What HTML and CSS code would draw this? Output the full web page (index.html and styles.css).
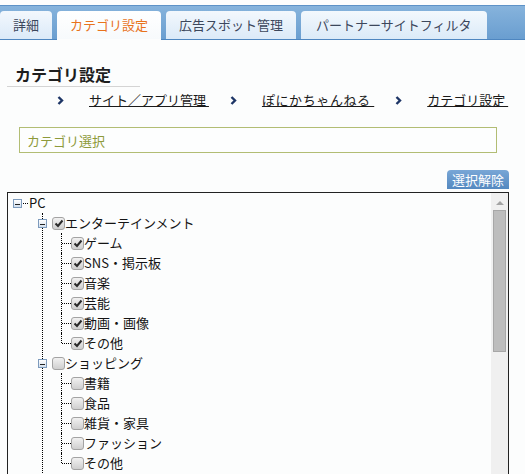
FILE: index.html
```html
<!DOCTYPE html>
<html lang="ja">
<head>
    <meta charset="UTF-8">
    <meta name="viewport" content="width=device-width, initial-scale=1.0">
    <title>カテゴリ設定</title>
    <link rel="stylesheet" href="styles.css">
</head>
<body>
    <div class="tabbar">
        <div class="tab">詳細</div>
        <div class="tab active">カテゴリ設定</div>
        <div class="tab">広告スポット管理</div>
        <div class="tab">パートナーサイトフィルタ</div>
    </div>

    <h1 class="title">カテゴリ設定</h1>

    <div class="crumbs">
        <div class="crumb">
            <svg class="chev" width="7" height="9" viewBox="0 0 7 9"><polyline points="1.5,1 5,4.5 1.5,8" fill="none" stroke="#1d3566" stroke-width="2.4"/></svg>
            <a href="#">サイト／アプリ管理&nbsp;</a>
        </div>
        <div class="crumb">
            <svg class="chev" width="7" height="9" viewBox="0 0 7 9"><polyline points="1.5,1 5,4.5 1.5,8" fill="none" stroke="#1d3566" stroke-width="2.4"/></svg>
            <a href="#">ぽにかちゃんねる&nbsp;</a>
        </div>
        <div class="crumb">
            <svg class="chev" width="7" height="9" viewBox="0 0 7 9"><polyline points="1.5,1 5,4.5 1.5,8" fill="none" stroke="#1d3566" stroke-width="2.4"/></svg>
            <a href="#">カテゴリ設定&nbsp;</a>
        </div>
    </div>

    <form class="search">
        <input name="category" placeholder="カテゴリ選択"/>
    </form>

    <div class="tools">
        <button class="clear">選択解除</button>
    </div>

    <div class="treebox">
        <div class="tree">
            <div class="row">
                <span class="exp"></span><span class="dots"></span><span class="label">PC</span>
            </div>
            <ul class="lvl1">
                <li>
                    <div class="row">
                        <span class="exp"></span>
                        <span class="cb on"><svg width="10" height="9" viewBox="0 0 10 9"><polyline points="1.5,4.5 4,7 8.5,1.5" fill="none" stroke="#2a2a2a" stroke-width="2"/></svg></span>
                        <span class="label">エンターテインメント</span>
                    </div>
                    <ul class="lvl2">
                        <li><span class="cb on"><svg width="10" height="9" viewBox="0 0 10 9"><polyline points="1.5,4.5 4,7 8.5,1.5" fill="none" stroke="#2a2a2a" stroke-width="2"/></svg></span><span class="label">ゲーム</span></li>
                        <li><span class="cb on"><svg width="10" height="9" viewBox="0 0 10 9"><polyline points="1.5,4.5 4,7 8.5,1.5" fill="none" stroke="#2a2a2a" stroke-width="2"/></svg></span><span class="label">SNS・掲示板</span></li>
                        <li><span class="cb on"><svg width="10" height="9" viewBox="0 0 10 9"><polyline points="1.5,4.5 4,7 8.5,1.5" fill="none" stroke="#2a2a2a" stroke-width="2"/></svg></span><span class="label">音楽</span></li>
                        <li><span class="cb on"><svg width="10" height="9" viewBox="0 0 10 9"><polyline points="1.5,4.5 4,7 8.5,1.5" fill="none" stroke="#2a2a2a" stroke-width="2"/></svg></span><span class="label">芸能</span></li>
                        <li><span class="cb on"><svg width="10" height="9" viewBox="0 0 10 9"><polyline points="1.5,4.5 4,7 8.5,1.5" fill="none" stroke="#2a2a2a" stroke-width="2"/></svg></span><span class="label">動画・画像</span></li>
                        <li><span class="cb on"><svg width="10" height="9" viewBox="0 0 10 9"><polyline points="1.5,4.5 4,7 8.5,1.5" fill="none" stroke="#2a2a2a" stroke-width="2"/></svg></span><span class="label">その他</span></li>
                    </ul>
                </li>
                <li>
                    <div class="row">
                        <span class="exp"></span>
                        <span class="cb"></span>
                        <span class="label">ショッピング</span>
                    </div>
                    <ul class="lvl2">
                        <li><span class="cb"></span><span class="label">書籍</span></li>
                        <li><span class="cb"></span><span class="label">食品</span></li>
                        <li><span class="cb"></span><span class="label">雑貨・家具</span></li>
                        <li><span class="cb"></span><span class="label">ファッション</span></li>
                        <li><span class="cb"></span><span class="label">その他</span></li>
                    </ul>
                </li>
            </ul>
        </div>
        <div class="scrollbar">
            <div class="arrow"></div>
            <div class="thumb"></div>
        </div>
    </div>
</body>
</html>
```

FILE: styles.css
```css
* {
    margin: 0;
    padding: 0;
    box-sizing: border-box;
    font-family: "Noto Sans CJK JP", "Liberation Sans", sans-serif;
}

body {
    background-color: #fcfdfd;
    color: #1a1a1a;
    font-size: 13px;
}

/* tabs */
.tabbar {
    margin-top: 5px;
    height: 35px;
    display: flex;
    align-items: flex-end;
    gap: 5px;
    background: linear-gradient(#86b3dc, #6a9ed0);
    border-top: 1px solid #5d92c7;
    border-bottom: 1px solid #4e86c0;
}

.tab {
    height: 29px;
    line-height: 28px;
    padding: 0 13px;
    margin-bottom: -1px;
    border-radius: 4px 4px 0 0;
    background: linear-gradient(#f3f8fd, #dbeaf8);
    border-bottom: 1px solid #4e86c0;
    color: #3c475c;
    font-size: 13px;
    white-space: nowrap;
}

.tab:last-child {
    padding: 0 15px;
}

.tab.active {
    background: linear-gradient(#ffffff, #f7fafc);
    border-bottom-color: #fcfdfd;
    color: #e8731c;
}

/* title */
h1.title {
    margin: 23px 0 0 7px;
    width: 133px;
    padding-left: 8px;
    font-size: 16px;
    line-height: 23px;
    font-weight: bold;
    color: #1e1e1e;
    border-bottom: 1px solid #d4d4d4;
}

.crumbs {
    display: flex;
    margin-top: 3px;
    padding-left: 57px;
    height: 20px;
    align-items: center;
}

.crumb {
    display: flex;
    align-items: center;
    flex-shrink: 0;
    white-space: nowrap;
    margin-right: 21px;
}

.crumb:last-child {
    margin-right: 0;
}

.chev {
    margin-right: 25px;
    flex-shrink: 0;
}

.crumb a {
    color: #1a1a1a;
    text-decoration: underline;
    font-size: 13px;
    line-height: 20px;
}

.crumb:nth-child(2) a {
    letter-spacing: 0.6px;
}

/* search */
.search {
    margin: 17px 0 0 19px;
    width: 478px;
}

.search input {
    width: 100%;
    height: 26px;
    padding: 0 7px;
    border: 1px solid #b2bd74;
    outline: none;
    background: #fdfefe;
    font-size: 13px;
}

.search input::placeholder {
    color: #8d9a3b;
}

.tools {
    display: flex;
    justify-content: flex-end;
    margin: 17px 16px 0 0;
}

button.clear {
    height: 19px;
    padding: 0 5px;
    border: none;
    border-radius: 4px 4px 0 0;
    background: linear-gradient(#78a6d6, #5489c0);
    color: #ffffff;
    font-size: 13px;
    line-height: 19px;
    cursor: pointer;
}

/* tree */
.treebox {
    margin: 3px 16px 0 7px;
    height: 300px;
    border: 1px solid #222;
    display: flex;
    overflow: hidden;
}

.tree {
    flex: 1;
    padding-left: 5px;
}

.tree ul {
    list-style: none;
}

.row {
    display: flex;
    align-items: center;
    height: 20px;
}

.exp {
    position: relative;
    width: 9px;
    height: 9px;
    border: 1px solid #7d9bbd;
    background: linear-gradient(#ffffff, #d3e0ee);
    flex-shrink: 0;
}

.exp::after {
    content: "";
    position: absolute;
    left: 1px;
    top: 4px;
    width: 5px;
    height: 1px;
    background: #222;
}

.dots {
    width: 5px;
    margin: 1px 1px 0 1px;
    border-top: 1px dotted #000;
}

.label {
    color: #141414;
    font-size: 13px;
    line-height: 20px;
    white-space: nowrap;
}

.cb {
    display: flex;
    align-items: center;
    justify-content: center;
    width: 13px;
    height: 13px;
    border: 1px solid #a3a3a3;
    border-radius: 3px;
    background: linear-gradient(#f1f1f1, #cfcfcf);
    flex-shrink: 0;
}

ul.lvl1 {
    margin-left: 29px;
    border-left: 1px dotted #000;
}

ul.lvl1 > li > .row .exp {
    margin-left: -5px;
}

ul.lvl1 > li > .row .cb {
    margin-left: 5px;
}

ul.lvl2 {
    margin-left: 18px;
}

ul.lvl2 li {
    position: relative;
    display: flex;
    align-items: center;
    height: 20px;
}

ul.lvl2 li::before {
    content: "";
    position: absolute;
    left: 0;
    top: 0;
    bottom: 0;
    border-left: 1px dotted #000;
}

ul.lvl2 li:last-child::before {
    bottom: 10px;
}

ul.lvl2 li::after {
    content: "";
    position: absolute;
    left: 1px;
    top: 10px;
    width: 9px;
    border-top: 1px dotted #000;
}

ul.lvl2 li .cb {
    margin-left: 10px;
}

/* scrollbar */
.scrollbar {
    width: 17px;
    background: #f0f0f0;
    display: flex;
    flex-direction: column;
    align-items: center;
}

.arrow {
    margin-top: 8px;
    width: 0;
    height: 0;
    border-left: 4px solid transparent;
    border-right: 4px solid transparent;
    border-bottom: 4px solid #a3a3a3;
}

.thumb {
    margin-top: 5px;
    width: 13px;
    height: 142px;
    background: #bdbdbd;
    border: 1px solid #a7a7a7;
}
```
